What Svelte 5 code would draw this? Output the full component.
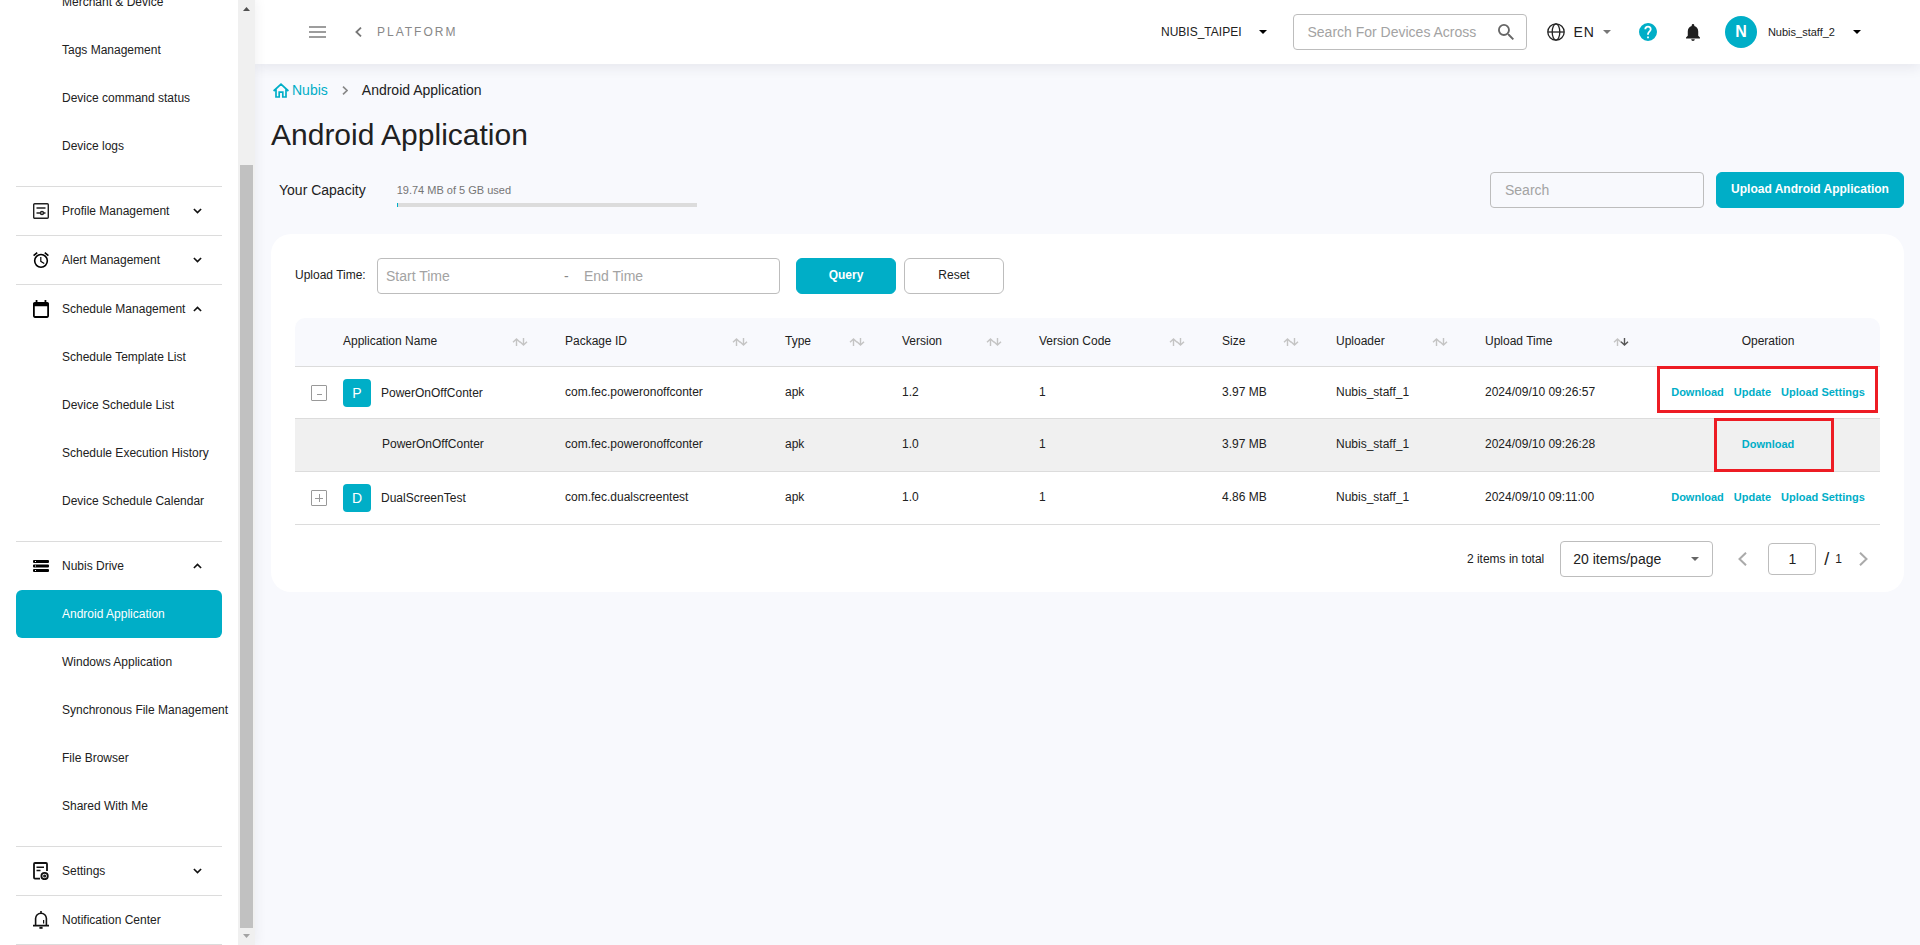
<script lang="ts">
	type NavSection = {
		label?: string;
		icon?: string;
		open?: boolean;
		expandable?: boolean;
		items: string[];
	};

	const sections: NavSection[] = [
		{ items: ['Merchant & Device', 'Tags Management', 'Device command status', 'Device logs'] },
		{ label: 'Profile Management', icon: 'profile', expandable: true, items: [] },
		{ label: 'Alert Management', icon: 'alarm', expandable: true, items: [] },
		{
			label: 'Schedule Management',
			icon: 'calendar',
			expandable: true,
			open: true,
			items: [
				'Schedule Template List',
				'Device Schedule List',
				'Schedule Execution History',
				'Device Schedule Calendar'
			]
		},
		{
			label: 'Nubis Drive',
			icon: 'drive',
			expandable: true,
			open: true,
			items: [
				'Android Application',
				'Windows Application',
				'Synchronous File Management',
				'File Browser',
				'Shared With Me'
			]
		},
		{ label: 'Settings', icon: 'settings', expandable: true, items: [] },
		{ label: 'Notification Center', icon: 'bell', items: [] }
	];

	const columns = [
		{ label: 'Application Name', width: 222 },
		{ label: 'Package ID', width: 220 },
		{ label: 'Type', width: 117 },
		{ label: 'Version', width: 137 },
		{ label: 'Version Code', width: 183 },
		{ label: 'Size', width: 114 },
		{ label: 'Uploader', width: 149 },
		{ label: 'Upload Time', width: 181, sorted: true }
	];

	const rows = [
		{
			name: 'PowerOnOffConter',
			cells: ['com.fec.poweronoffconter', 'apk', '1.2', '1', '3.97 MB', 'Nubis_staff_1', '2024/09/10 09:26:57'],
			actions: ['Download', 'Update', 'Upload Settings'],
			open: true,
			child: false,
			marked: true
		},
		{
			name: 'PowerOnOffConter',
			cells: ['com.fec.poweronoffconter', 'apk', '1.0', '1', '3.97 MB', 'Nubis_staff_1', '2024/09/10 09:26:28'],
			actions: ['Download'],
			open: false,
			child: true,
			marked: true
		},
		{
			name: 'DualScreenTest',
			cells: ['com.fec.dualscreentest', 'apk', '1.0', '1', '4.86 MB', 'Nubis_staff_1', '2024/09/10 09:11:00'],
			actions: ['Download', 'Update', 'Upload Settings'],
			open: false,
			child: false,
			marked: false
		}
	];

	const usedMb = 19.74;
	const totalMb = 5 * 1024;

	let active = $state('Android Application');
	let startTime = $state('');
	let endTime = $state('');
	let page = $state('1');

	function reset() {
		startTime = '';
		endTime = '';
	}
</script>

{#snippet caret()}
	<svg class="caret" viewBox="0 0 10 5" width="8" height="4"><path d="M0 0h10L5 5z" /></svg>
{/snippet}

{#snippet navIcon(name: string | undefined)}
	{#if name === 'profile'}
		<svg viewBox="0 0 16 16" width="16" height="16" fill="none" stroke="#222" stroke-width="1.4">
			<rect x=".7" y=".7" width="14.6" height="14.6" rx="1" />
			<path d="M3.5 5h9M3.5 10h4M10.5 10h2" />
			<circle cx="9" cy="10" r="1.5" />
		</svg>
	{:else if name === 'alarm'}
		<svg viewBox="2 1.8 20 20.2" width="16" height="16">
			<path
				d="M12,20A7,7 0 0,1 5,13A7,7 0 0,1 12,6A7,7 0 0,1 19,13A7,7 0 0,1 12,20M12,4A9,9 0 0,0 3,13A9,9 0 0,0 12,22A9,9 0 0,0 21,13A9,9 0 0,0 12,4M12.5,8H11V14L15.75,16.85L16.5,15.62L12.5,13.25V8M7.88,3.39L6.6,1.86L2,5.71L3.29,7.24L7.88,3.39M22,5.72L17.4,1.86L16.11,3.39L20.71,7.25L22,5.72Z"
			/>
		</svg>
	{:else if name === 'calendar'}
		<svg viewBox="3 1 18 20" width="16" height="18">
			<path
				d="M19,19H5V8H19M16,1V3H8V1H6V3H5C3.89,3 3,3.89 3,5V19A2,2 0 0,0 5,21H19A2,2 0 0,0 21,19V5C21,3.89 20.1,3 19,3H18V1"
			/>
		</svg>
	{:else if name === 'drive'}
		<svg viewBox="0 0 16 12" width="16" height="12">
			<path
				fill-rule="evenodd"
				d="M1 0h14q1 0 1 1v1q0 1-1 1H1Q0 3 0 2V1q0-1 1-1zm1 1v1h1V1zM1 4.5h14q1 0 1 1v1q0 1-1 1H1q-1 0-1-1v-1q0-1 1-1zm1 1v1h1v-1zM1 9h14q1 0 1 1v1q0 1-1 1H1q-1 0-1-1v-1q0-1 1-1zm1 1v1h1v-1z"
			/>
		</svg>
	{:else if name === 'settings'}
		<svg viewBox="0 0 16 18" width="16" height="18" fill="none" stroke="#111" stroke-width="1.8">
			<path d="M7 16.6H2Q1 16.6 1 15.6V2q0-1 1-1h11q1 0 1 1v7" />
			<path d="M3.5 5.2h7.5M3.5 8.4h4" stroke-width="1.5" />
			<circle cx="11.6" cy="14" r="3.2" />
			<circle cx="11.6" cy="14" r=".6" />
		</svg>
	{:else if name === 'bell'}
		<svg viewBox="0 0 16 18" width="16" height="18" fill="none" stroke="#111" stroke-width="1.6">
			<path d="M8 0v2M2.6 14V7.6a5.4 5.4 0 0 1 10.8 0V14M0 14.6h16" />
			<path d="M10.6 9v3.6" stroke-width="1.2" />
			<path d="M6.4 16.8h3.2" stroke-width="2" />
		</svg>
	{/if}
{/snippet}

<div class="layout">
	<aside class="sidebar">
		<nav>
			{#each sections as section}
				<div class="section">
					{#if section.label}
						<button class="section-head">
							<span class="section-icon">{@render navIcon(section.icon)}</span>
							<span class="section-label">{section.label}</span>
							{#if section.expandable}
								<svg viewBox="0 0 10 6" width="9" height="6" fill="none" stroke="#111" stroke-width="1.8">
									<path d={section.open ? 'M1 5.2l4-4 4 4' : 'M1 .8l4 4 4-4'} />
								</svg>
							{/if}
						</button>
					{/if}
					{#if section.items.length}
						<ul>
							{#each section.items as item}
								<li>
									<a href="#top" class:active={item === active} onclick={() => (active = item)}>{item}</a>
								</li>
							{/each}
						</ul>
					{/if}
				</div>
			{/each}
		</nav>
		<div class="scrollbar" aria-hidden="true">
			<svg viewBox="0 0 17 17" width="17" height="17" fill="#505050"><path d="M5 11h7L8.5 7z" /></svg>
			<div class="track"></div>
			<div class="thumb"></div>
			<svg viewBox="0 0 17 17" width="17" height="17" fill="#a3a3a3"><path d="M5 6h7l-3.5 4z" /></svg>
		</div>
	</aside>

	<div class="content">
		<header>
			<button class="menu" aria-label="Toggle menu">
				<svg viewBox="0 0 17 12" width="17" height="12" stroke="#7d7d7d" stroke-width="1.6">
					<path d="M0 1h17M0 6h17M0 11h17" />
				</svg>
			</button>
			<a href="#top" class="platform">
				<svg viewBox="0 0 7 10" width="7" height="10" fill="none" stroke="#777" stroke-width="1.8">
					<path d="M6 .6L1.4 5 6 9.4" />
				</svg>
				PLATFORM
			</a>
			<div class="tools">
				<button class="org">NUBIS_TAIPEI {@render caret()}</button>
				<label class="field device-search">
					<input type="text" placeholder="Search For Devices Across Merchants" aria-label="Search devices" />
					<svg viewBox="3 3 17.5 17.5" width="16" height="16" fill="#666">
						<path
							d="M9.5,3A6.5,6.5 0 0,1 16,9.5C16,11.11 15.41,12.59 14.44,13.73L14.71,14H15.5L20.5,19L19,20.5L14,15.5V14.71L13.73,14.44C12.59,15.41 11.11,16 9.5,16A6.5,6.5 0 0,1 3,9.5A6.5,6.5 0 0,1 9.5,3M9.5,5C7,5 5,7 5,9.5C5,12 7,14 9.5,14C12,14 14,12 14,9.5C14,7 12,5 9.5,5Z"
						/>
					</svg>
				</label>
				<button class="lang">
					<svg viewBox="0 0 18 18" width="18" height="18" fill="none" stroke="#222" stroke-width="1.3">
						<circle cx="9" cy="9" r="8.2" />
						<ellipse cx="9" cy="9" rx="3.8" ry="8.2" />
						<path d="M1 9h16" />
					</svg>
					<span>EN</span>
					{@render caret()}
				</button>
				<button class="help" aria-label="Help">
					<svg viewBox="2 2 20 20" width="18" height="18" fill="#00aec7">
						<path
							d="M15.07,11.25L14.17,12.17C13.45,12.89 13,13.5 13,15H11V14.5C11,13.39 11.45,12.39 12.17,11.67L13.41,10.41C13.78,10.05 14,9.55 14,9C14,7.89 13.1,7 12,7A2,2 0 0,0 10,9H8A4,4 0 0,1 12,5A4,4 0 0,1 16,9C16,9.88 15.64,10.67 15.07,11.25M13,19H11V17H13M12,2A10,10 0 0,0 2,12A10,10 0 0,0 12,22A10,10 0 0,0 22,12C22,6.47 17.5,2 12,2Z"
						/>
					</svg>
				</button>
				<button class="alerts" aria-label="Notifications">
					<svg viewBox="4 2.5 16 19.5" width="14" height="17" fill="#1f1f1f">
						<path
							d="M12 22c1.1 0 2-.9 2-2h-4c0 1.1.89 2 2 2zm6-6v-5c0-3.07-1.64-5.64-4.5-6.32V4c0-.83-.67-1.5-1.5-1.5s-1.5.67-1.5 1.5v.68C7.63 5.36 6 7.92 6 11v5l-2 2v1h16v-1l-2-2z"
						/>
					</svg>
				</button>
				<button class="user">
					<span class="avatar">N</span>
					<span class="user-name">Nubis_staff_2</span>
					{@render caret()}
				</button>
			</div>
		</header>

		<main>
			<nav class="crumbs" aria-label="Breadcrumb">
				<a href="#top">
					<svg viewBox="0 0 16 15" width="16" height="15" fill="none" stroke="#00aec7" stroke-width="1.7">
						<path d="M.6 8L8 1.2 15.4 8M3 6.5V14h3.2V9.2h3.6V14H13V6.5" />
					</svg>
					Nubis
				</a>
				<svg viewBox="0 0 6 9" width="6" height="9" fill="none" stroke="#888" stroke-width="1.6">
					<path d="M1 .6l4 3.9-4 3.9" />
				</svg>
				<span>Android Application</span>
			</nav>
			<h1>Android Application</h1>

			<div class="toolbar">
				<span class="capacity-label">Your Capacity</span>
				<div class="capacity">
					<span>{usedMb} MB of 5 GB used</span>
					<div class="bar" role="progressbar" aria-label="Capacity" aria-valuenow={usedMb} aria-valuemax={totalMb}>
						<div class="bar-fill" style="width: {(usedMb / totalMb) * 100}%"></div>
					</div>
				</div>
				<input class="field app-search" type="text" placeholder="Search" aria-label="Search" />
				<button class="btn primary upload">Upload Android Application</button>
			</div>

			<section class="card">
				<form class="filters" onsubmit={(e) => e.preventDefault()}>
					<label for="start">Upload Time:</label>
					<div class="field range">
						<input id="start" type="text" placeholder="Start Time" bind:value={startTime} />
						<span>-</span>
						<input type="text" placeholder="End Time" aria-label="End time" bind:value={endTime} />
					</div>
					<button type="submit" class="btn primary">Query</button>
					<button type="button" class="btn" onclick={reset}>Reset</button>
				</form>

				<table>
					<colgroup>
						<col style="width: 32px" />
						{#each columns as column}
							<col style="width: {column.width}px" />
						{/each}
						<col style="width: 230px" />
					</colgroup>
					<thead>
						<tr>
							<th></th>
							{#each columns as column}
								<th>
									<div class="th">
										{column.label}
										<svg viewBox="0 0 16 8" width="16" height="8" fill="none" stroke="#c4c4c4" stroke-width="1.4">
											<path d="M4.5 8V1M1 4.3L4.5 1 8 4.3" />
											<path class:sorted={column.sorted} d="M11.5 0v7M8 3.7L11.5 7 15 3.7" />
										</svg>
									</div>
								</th>
							{/each}
							<th class="operation">Operation</th>
						</tr>
					</thead>
					<tbody>
						{#each rows as row}
							<tr class:child={row.child}>
								<td class="toggle">
									{#if !row.child}
										<button class="expander" aria-label="Toggle versions">
											<svg viewBox="0 0 8 8" width="8" height="8" stroke="#999">
												{#if row.open}
													<path d="M2 5.5h5" />
												{:else}
													<path d="M0 4.5h8M4.5 0v8" />
												{/if}
											</svg>
										</button>
									{/if}
								</td>
								<td class="name">
									<div class="app">
										{#if !row.child}
											<span class="tile">{row.name[0]}</span>
										{/if}
										{row.name}
									</div>
								</td>
								{#each row.cells as cell}
									<td>{cell}</td>
								{/each}
								<td class="operation">
									<div class="actions">
										{#each row.actions as action}
											<button>{action}</button>
										{/each}
									</div>
									{#if row.marked}
										<div class="mark"></div>
									{/if}
								</td>
							</tr>
						{/each}
					</tbody>
				</table>

				<div class="pagination">
					<span>2 items in total</span>
					<div class="page-size">
						<select class="field" aria-label="Items per page">
							<option>20 items/page</option>
							<option>50 items/page</option>
						</select>
						{@render caret()}
					</div>
					<button aria-label="Previous page">
						<svg viewBox="0 0 9 14" width="9" height="14"><path d="M8 .7L1.5 7 8 13.3" /></svg>
					</button>
					<input class="field page" type="text" aria-label="Page" bind:value={page} />
					<span class="slash">/</span>
					<span>1</span>
					<button class="next" aria-label="Next page">
						<svg viewBox="0 0 9 14" width="9" height="14"><path d="M1 .7L7.5 7 1 13.3" /></svg>
					</button>
				</div>
			</section>
		</main>
	</div>
</div>

<style>
	:global(body) {
		background: #f8f9fd;
		color: #212121;
		font-family: Arial, 'Liberation Sans', sans-serif;
		font-size: 12px;
	}

	* {
		box-sizing: border-box;
	}

	button,
	input,
	select {
		font-family: inherit;
		font-size: 12px;
		color: inherit;
		background: none;
		border: none;
		padding: 0;
		margin: 0;
		outline: none;
	}

	button {
		cursor: pointer;
	}

	a {
		color: inherit;
		text-decoration: none;
	}

	svg {
		flex: none;
		display: block;
	}

	.layout {
		display: flex;
		min-height: 100vh;
	}

	/* sidebar */
	.sidebar {
		position: sticky;
		top: 0;
		z-index: 2;
		flex: none;
		display: flex;
		width: 255px;
		height: 100vh;
		background: #fff;
		box-shadow: 0 0 12px rgba(40, 40, 60, 0.08);
	}

	.sidebar nav {
		flex: 1;
		min-width: 0;
		display: flex;
		flex-direction: column;
		justify-content: flex-end;
		padding: 0 16px;
		overflow: hidden;
	}

	.section {
		flex: none;
		border-bottom: 1px solid #dcdcdc;
	}

	.section-head {
		display: flex;
		align-items: center;
		width: 100%;
		height: 48px;
		padding: 0 20px 0 17px;
		text-align: left;
		white-space: nowrap;
	}

	.section-icon {
		width: 29px;
	}

	.section-label {
		flex: 1;
		min-width: 0;
	}

	ul {
		list-style: none;
		margin: 0;
		padding: 0 0 16px;
	}

	li a {
		display: block;
		padding-left: 46px;
		line-height: 48px;
		border-radius: 6px;
		white-space: nowrap;
	}

	li a.active {
		background: #00aec7;
		color: #fff;
	}

	.scrollbar {
		display: flex;
		flex-direction: column;
		align-items: center;
		width: 17px;
		background: #f0f0f0;
	}

	.track {
		flex: 148;
	}

	.thumb {
		flex: 763;
		width: 13px;
		background: #c1c1c1;
	}

	/* top bar */
	.content {
		flex: 1;
		min-width: 0;
	}

	header {
		display: flex;
		align-items: center;
		height: 64px;
		padding: 0 59px 0 54px;
		background: #fff;
		box-shadow: 0 4px 12px rgba(40, 40, 60, 0.08);
	}

	.platform {
		display: flex;
		align-items: center;
		gap: 15px;
		margin-left: 29px;
		color: #888;
		letter-spacing: 2px;
	}

	.tools {
		display: flex;
		align-items: center;
		margin-left: auto;
	}

	.org,
	.lang,
	.user {
		display: flex;
		align-items: center;
	}

	.org {
		gap: 18px;
	}

	.field {
		height: 36px;
		border: 1px solid #bdbdbd;
		border-radius: 4px;
		font-size: 14px;
	}

	.field input {
		font-size: 14px;
	}

	::placeholder {
		color: #a3a3a3;
		opacity: 1;
	}

	.device-search {
		display: flex;
		align-items: center;
		justify-content: space-between;
		width: 234px;
		margin-left: 26px;
		padding: 0 12px 0 13px;
	}

	.device-search input {
		width: 171px;
	}

	.lang {
		gap: 8px;
		margin-left: 20px;
	}

	.lang span {
		font-size: 14px;
		letter-spacing: 1px;
	}

	.lang .caret {
		fill: #777;
	}

	.help {
		margin-left: 28px;
	}

	.alerts {
		margin-left: 29px;
	}

	.user {
		margin-left: 25px;
	}

	.avatar {
		width: 32px;
		line-height: 32px;
		border-radius: 50%;
		background: #00aec7;
		color: #fff;
		font-size: 16px;
		font-weight: 700;
	}

	.user-name {
		margin: 0 18px 0 11px;
		font-size: 11px;
	}

	/* page */
	main {
		padding: 12px 16px;
	}

	.crumbs {
		display: flex;
		align-items: center;
		height: 28px;
		padding-left: 2px;
		gap: 14px;
		font-size: 14px;
	}

	.crumbs a {
		display: flex;
		align-items: center;
		gap: 3px;
		color: #00aec7;
	}

	h1 {
		margin: 11px 0 17px;
		font-size: 30px;
		font-weight: 400;
		line-height: 40px;
	}

	.toolbar {
		display: flex;
		align-items: center;
		padding-left: 8px;
	}

	.capacity-label {
		font-size: 14px;
	}

	.capacity {
		align-self: flex-end;
		width: 300px;
		margin-left: 31px;
		padding-bottom: 1px;
		font-size: 11px;
		line-height: 16px;
		color: #757575;
	}

	.bar {
		height: 4px;
		margin-top: 5px;
		background: #dcdcdc;
	}

	.bar-fill {
		height: 4px;
		background: #00aec7;
	}

	.app-search {
		width: 214px;
		margin-left: auto;
		padding: 0 14px;
	}

	.btn {
		width: 100px;
		height: 36px;
		padding-bottom: 2px;
		border: 1px solid #bdbdbd;
		border-radius: 6px;
	}

	.btn.primary {
		border-color: #00aec7;
		background: #00aec7;
		color: #fff;
		font-weight: 700;
	}

	.btn.upload {
		width: 188px;
		margin-left: 12px;
	}

	.card {
		margin-top: 26px;
		padding: 24px 24px 15px;
		border-radius: 20px;
		background: #fff;
	}

	.filters {
		display: flex;
		align-items: center;
		gap: 8px;
	}

	.filters label {
		width: 74px;
		padding-bottom: 2px;
	}

	.range {
		display: flex;
		align-items: center;
		width: 403px;
		margin-right: 8px;
		padding: 0 8px;
		color: #888;
	}

	.range input {
		width: 178px;
	}

	.range span {
		width: 20px;
	}

	/* table */
	table {
		width: 100%;
		margin-top: 24px;
		table-layout: fixed;
		border-collapse: separate;
		border-spacing: 0;
	}

	th {
		height: 49px;
		padding: 0 21px 3px 16px;
		border-bottom: 1px solid #dcdcdc;
		background: #f8f9fd;
		font-weight: 400;
		text-align: left;
	}

	th:first-child {
		padding: 0;
		border-top-left-radius: 10px;
	}

	th:last-child {
		border-top-right-radius: 10px;
	}

	.th {
		display: flex;
		align-items: center;
		justify-content: space-between;
		white-space: nowrap;
	}

	.th svg {
		margin-top: 3px;
	}

	.sorted {
		stroke: #555;
	}

	td {
		height: 53px;
		padding: 0 16px 2px;
		border-bottom: 1px solid #dcdcdc;
		white-space: nowrap;
	}

	tr:first-child td {
		height: 52px;
	}

	td.toggle,
	td.name {
		padding: 0 0 0 16px;
	}

	.child td {
		background: #f0f0f0;
	}

	.child .app {
		padding: 0 0 2px 39px;
	}

	.expander {
		display: flex;
		align-items: center;
		justify-content: center;
		width: 16px;
		height: 16px;
		border: 1px solid #999;
		border-radius: 1px;
	}

	.app {
		display: flex;
		align-items: center;
		gap: 10px;
	}

	.tile {
		width: 28px;
		line-height: 28px;
		border-radius: 4px;
		background: #00aec7;
		color: #fff;
		font-size: 14px;
		text-align: center;
	}

	.operation {
		position: relative;
		padding: 0 6px 2px 12px;
		text-align: center;
	}

	.actions {
		display: flex;
		justify-content: center;
		gap: 10px;
	}

	.actions button {
		color: #00aec7;
		font-size: 11px;
		font-weight: 700;
	}

	/* frame around the available operations */
	.mark {
		position: absolute;
		inset: -1px 2px 5px 7px;
		border: 3px solid #ed1c24;
		pointer-events: none;
	}

	.child .mark {
		inset: -1px 46px -1px 64px;
	}

	/* pagination */
	.pagination {
		display: flex;
		align-items: center;
		justify-content: flex-end;
		margin-top: 16px;
		padding-right: 12px;
	}

	.page-size {
		position: relative;
		margin: 0 25px 0 16px;
	}

	.page-size select {
		width: 153px;
		padding: 0 12px;
		appearance: none;
	}

	.page-size .caret {
		position: absolute;
		top: 16px;
		right: 14px;
		fill: #666;
		pointer-events: none;
	}

	.pagination path {
		fill: none;
		stroke: #aaa;
		stroke-width: 2;
	}

	.pagination .caret path {
		fill: #666;
		stroke: none;
	}

	.page {
		width: 48px;
		height: 32px;
		margin: 0 8px 0 21px;
		text-align: center;
	}

	.slash {
		margin-right: 6px;
		font-size: 18px;
	}

	.next {
		margin-left: 17px;
	}
</style>
